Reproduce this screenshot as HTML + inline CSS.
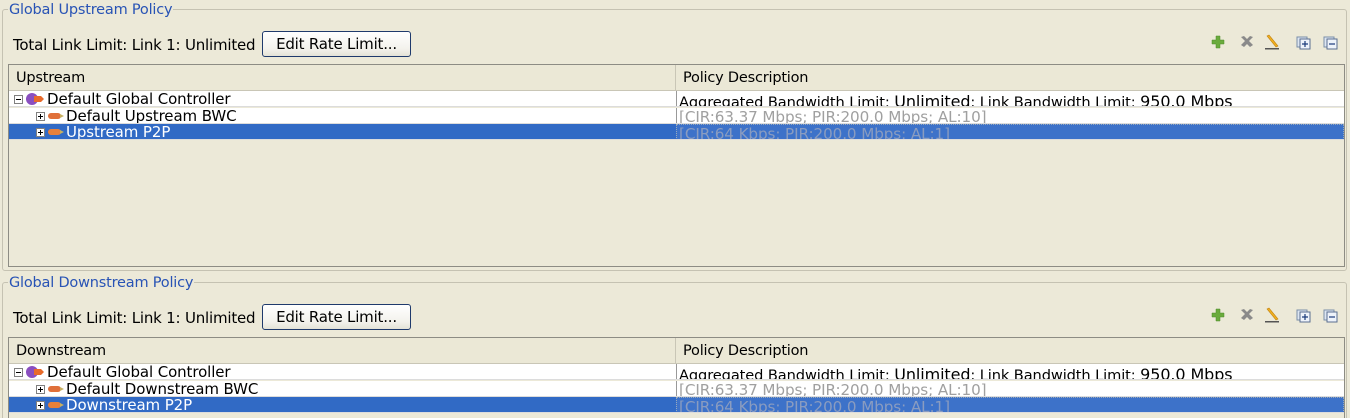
<!DOCTYPE html>
<html style="width:1350px;height:418px;overflow:hidden"><head><meta charset="utf-8"><style>
*{margin:0;padding:0;box-sizing:border-box}
body{width:1350px;height:418px;background:#ece9d8;font-family:"DejaVu Sans","Liberation Sans",sans-serif;font-size:14px;color:#000;position:relative;overflow:hidden}
.a{position:absolute}
.grp{position:absolute;left:2px;right:3px;border:1px solid #c5c2b2;border-radius:3px}
.ttl{position:absolute;left:8px;background:#ece9d8;color:#2853b5;font-size:14.5px;line-height:16px;padding:0 1px;letter-spacing:-0.2px}
.lbl{position:absolute;left:13px;font-size:15px;letter-spacing:-0.2px}
.btn{position:absolute;left:262px;width:149px;height:26px;border:1px solid #1f3a6c;border-radius:3px;background:linear-gradient(#fff,#f3f2ec 70%,#e4e2d6);font-size:15px;text-align:center;line-height:24px;letter-spacing:-0.2px}
.tbl{position:absolute;left:8px;width:1337px;border:1px solid #8d8c84;background:#ece9d8}
.hdr{position:absolute;left:0;top:0;width:1335px;height:26px;background:#ebe8d6;border-bottom:1px solid #c9c6b6}
.hdr div{position:absolute;top:0;height:25px;line-height:26px;font-size:14.5px;padding-left:7px;letter-spacing:-0.2px}
.row{position:absolute;left:0;width:1335px;height:16px;overflow:hidden;background:#fff;border-bottom:1px solid #dcdcdc}
.row .c1{position:absolute;left:0;top:0;width:667px;height:16px;overflow:hidden;white-space:nowrap;line-height:17px;font-size:15px;letter-spacing:-0.1px}
.row .c2{position:absolute;left:667px;top:0;width:668px;height:16px;overflow:hidden;white-space:nowrap;border-left:1px solid #999;padding-left:2px;line-height:22px;font-size:14.6px;letter-spacing:-0.1px}
.sel{background:#316ac5}
.sel .c1{color:#fff}
.sel .c2{background:#3d72c9;color:#8a9cc0;border:1px dotted #9ab}
.gr{color:#a0a0a0;font-size:15.2px!important}
.pm{display:inline-block;width:9px;height:9px;border:1px solid #808080;background:#fff;vertical-align:0px;position:relative}
</style></head><body>

<div class="grp" style="top:9px;height:262px"></div>
<div class="ttl" style="top:2px">Global Upstream Policy</div>
<div class="lbl" style="top:36px">Total Link Limit: Link 1: Unlimited</div>
<div class="btn" style="top:31px">Edit Rate Limit...</div>
<div class="tbl" style="top:64px;height:203px">
 <div class="hdr"><div style="left:0;width:667px;border-right:1px solid #c9c6b6">Upstream</div><div style="left:667px;width:668px">Policy Description</div></div>
 <div class="row" style="top:26px"><div class="c1"><span style="margin-left:5px" class="pm"><span class="a" style="left:1px;top:3px;width:5px;height:1px;background:#000"></span></span><svg width="24" height="14" style="vertical-align:-2px"><circle cx="9" cy="7" r="6" fill="#8a4fc0"/><path d="M11 4h7l3 3-3 3h-7z" fill="#e86a2a"/></svg>Default Global Controller</div><div class="c2">Aggregated Bandwidth Limit: <span style="font-size:16px">Unlimited</span>; Link Bandwidth Limit: <span style="font-size:16px">950.0 Mbps</span></div></div>
 <div class="row" style="top:43px"><div class="c1"><span style="margin-left:27px" class="pm"><span class="a" style="left:1px;top:3px;width:5px;height:1px;background:#000"></span><span class="a" style="left:3px;top:1px;width:1px;height:5px;background:#000"></span></span><svg width="21" height="12" style="vertical-align:-1px"><rect x="3" y="3" width="13" height="6" rx="3" fill="#e0703a"/><path d="M15 4l4 2-4 2z" fill="#c8b060"/></svg>Default Upstream BWC</div><div class="c2 gr" style="line-height:18px">[CIR:63.37 Mbps; PIR:200.0 Mbps; AL:10]</div></div>
 <div class="row sel" style="top:59px"><div class="c1"><span style="margin-left:27px" class="pm"><span class="a" style="left:1px;top:3px;width:5px;height:1px;background:#000"></span><span class="a" style="left:3px;top:1px;width:1px;height:5px;background:#000"></span></span><svg width="21" height="12" style="vertical-align:-1px"><rect x="3" y="3" width="13" height="6" rx="3" fill="#e8803a"/><path d="M15 4l4 2-4 2z" fill="#c8b060"/></svg>Upstream P2P</div><div class="c2" style="line-height:18px;font-size:15.2px">[CIR:64 Kbps; PIR:200.0 Mbps; AL:1]</div></div>
</div>

<div class="grp" style="top:282px;height:150px"></div>
<div class="ttl" style="top:275px">Global Downstream Policy</div>
<div class="lbl" style="top:309px">Total Link Limit: Link 1: Unlimited</div>
<div class="btn" style="top:304px">Edit Rate Limit...</div>
<div class="tbl" style="top:337px;height:100px">
 <div class="hdr"><div style="left:0;width:667px;border-right:1px solid #c9c6b6">Downstream</div><div style="left:667px;width:668px">Policy Description</div></div>
 <div class="row" style="top:26px"><div class="c1"><span style="margin-left:5px" class="pm"><span class="a" style="left:1px;top:3px;width:5px;height:1px;background:#000"></span></span><svg width="24" height="14" style="vertical-align:-2px"><circle cx="9" cy="7" r="6" fill="#8a4fc0"/><path d="M11 4h7l3 3-3 3h-7z" fill="#e86a2a"/></svg>Default Global Controller</div><div class="c2">Aggregated Bandwidth Limit: <span style="font-size:16px">Unlimited</span>; Link Bandwidth Limit: <span style="font-size:16px">950.0 Mbps</span></div></div>
 <div class="row" style="top:43px"><div class="c1"><span style="margin-left:27px" class="pm"><span class="a" style="left:1px;top:3px;width:5px;height:1px;background:#000"></span><span class="a" style="left:3px;top:1px;width:1px;height:5px;background:#000"></span></span><svg width="21" height="12" style="vertical-align:-1px"><rect x="3" y="3" width="13" height="6" rx="3" fill="#e0703a"/><path d="M15 4l4 2-4 2z" fill="#c8b060"/></svg>Default Downstream BWC</div><div class="c2 gr" style="line-height:18px">[CIR:63.37 Mbps; PIR:200.0 Mbps; AL:10]</div></div>
 <div class="row sel" style="top:59px"><div class="c1"><span style="margin-left:27px" class="pm"><span class="a" style="left:1px;top:3px;width:5px;height:1px;background:#000"></span><span class="a" style="left:3px;top:1px;width:1px;height:5px;background:#000"></span></span><svg width="21" height="12" style="vertical-align:-1px"><rect x="3" y="3" width="13" height="6" rx="3" fill="#e8803a"/><path d="M15 4l4 2-4 2z" fill="#c8b060"/></svg>Downstream P2P</div><div class="c2" style="line-height:18px;font-size:15.2px">[CIR:64 Kbps; PIR:200.0 Mbps; AL:1]</div></div>
</div>

<svg class="a" style="left:1205px;top:32px" width="140" height="20">
 <path d="M11 4h4v4h4v4h-4v4h-4v-4H7V8h4z" fill="#6aab3c" stroke="#4d8a2a" stroke-width="0.5"/>
 <path d="M36 5l3-1 3 3 3-3 3 1-4 4 4 4-3 2-3-3-3 3-3-2 4-4z" fill="#8a8a8a"/>
 <path d="M62 4l2-1 9 11-2 1z" fill="#f0b020" stroke="#c08010" stroke-width="0.6"/>
 <rect x="60" y="16" width="14" height="1.5" fill="#555"/>
 <rect x="92" y="5" width="10" height="10" fill="#dde6f2" stroke="#7a8ea8"/>
 <rect x="95" y="7" width="10" height="10" fill="#eef3fa" stroke="#5a6e90"/>
 <path d="M100 9v6M97 12h6" stroke="#1a3a7a" stroke-width="1.2"/>
 <rect x="119" y="5" width="10" height="10" fill="#dde6f2" stroke="#7a8ea8"/>
 <rect x="122" y="7" width="10" height="10" fill="#eef3fa" stroke="#5a6e90"/>
 <path d="M124 12h6" stroke="#1a3a7a" stroke-width="1.2"/>
</svg>
<svg class="a" style="left:1205px;top:305px" width="140" height="20">
 <path d="M11 4h4v4h4v4h-4v4h-4v-4H7V8h4z" fill="#6aab3c" stroke="#4d8a2a" stroke-width="0.5"/>
 <path d="M36 5l3-1 3 3 3-3 3 1-4 4 4 4-3 2-3-3-3 3-3-2 4-4z" fill="#8a8a8a"/>
 <path d="M62 4l2-1 9 11-2 1z" fill="#f0b020" stroke="#c08010" stroke-width="0.6"/>
 <rect x="60" y="16" width="14" height="1.5" fill="#555"/>
 <rect x="92" y="5" width="10" height="10" fill="#dde6f2" stroke="#7a8ea8"/>
 <rect x="95" y="7" width="10" height="10" fill="#eef3fa" stroke="#5a6e90"/>
 <path d="M100 9v6M97 12h6" stroke="#1a3a7a" stroke-width="1.2"/>
 <rect x="119" y="5" width="10" height="10" fill="#dde6f2" stroke="#7a8ea8"/>
 <rect x="122" y="7" width="10" height="10" fill="#eef3fa" stroke="#5a6e90"/>
 <path d="M124 12h6" stroke="#1a3a7a" stroke-width="1.2"/>
</svg>
</body></html>
